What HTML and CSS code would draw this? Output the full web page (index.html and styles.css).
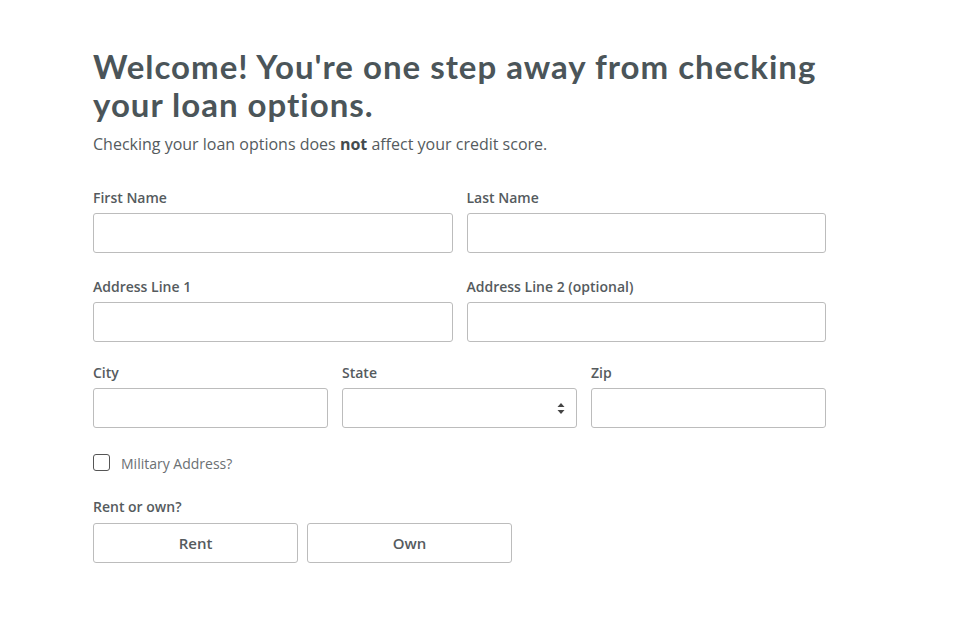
FILE: index.html
```html
<!DOCTYPE html>
<html lang="en">
<head>
    <meta charset="UTF-8">
    <meta name="viewport" content="width=device-width, initial-scale=1.0">
    <title>Check your loan options</title>
    <link rel="stylesheet" href="styles.css">
</head>
<body>
    <div class="container">
        <h1>Welcome! You're one step away from checking your loan options.</h1>
        <p class="subtitle">Checking your loan options does <b>not</b> affect your credit score.</p>

        <form class="form">
            <div class="row two">
                <div class="field">
                    <label>First Name</label>
                    <input type="text">
                </div>
                <div class="field">
                    <label>Last Name</label>
                    <input type="text">
                </div>
            </div>

            <div class="row two address">
                <div class="field">
                    <label>Address Line 1</label>
                    <input type="text">
                </div>
                <div class="field">
                    <label>Address Line 2 (optional)</label>
                    <input type="text">
                </div>
            </div>

            <div class="row three">
                <div class="field">
                    <label>City</label>
                    <input type="text">
                </div>
                <div class="field">
                    <label>State</label>
                    <div class="select">
                        <span class="arrows">
                            <svg width="8" height="13" viewBox="0 0 8 13"><path d="M4 1 L7.5 5 L0.5 5 Z M4 12 L7.5 8 L0.5 8 Z" fill="#444"/></svg>
                        </span>
                    </div>
                </div>
                <div class="field">
                    <label>Zip</label>
                    <input type="text">
                </div>
            </div>

            <label class="check">
                <span class="box"></span>
                <span>Military Address?</span>
            </label>

            <div class="choice">
                <label>Rent or own?</label>
                <div class="buttons">
                    <button type="button">Rent</button>
                    <button type="button">Own</button>
                </div>
            </div>
        </form>
    </div>
</body>
</html>
```

FILE: styles.css
```css
body {
    margin: 0;
    padding: 0;
    background: #ffffff;
    font-family: "Open Sans", Arial, sans-serif;
    color: #555b5e;
}
.container {
    width: 733px;
    padding: 47px 0 0 93px;
}
h1 {
    font-family: Lato, "Open Sans", sans-serif;
    font-weight: 700;
    font-size: 33px;
    line-height: 38px;
    color: #4b5559;
    margin: 0;
    letter-spacing: 1px;
}
.subtitle {
    margin: 10px 0 0;
    font-size: 16px;
    line-height: 22px;
    color: #555b5e;
}
.subtitle b {
    font-weight: 700;
    color: #444b4e;
}
.form {
    margin-top: 33px;
}
.row {
    display: grid;
    gap: 14px;
    margin-bottom: 24px;
}
.row.address {
    margin-bottom: 21px;
}
.row.three {
    margin-bottom: 23px;
}
.row.two {
    grid-template-columns: 1fr 1fr;
}
.row.three {
    grid-template-columns: 1fr 1fr 1fr;
}
.field label,
.choice label {
    display: block;
    font-size: 14px;
    font-weight: 600;
    line-height: 20px;
    color: #555b5e;
    margin-bottom: 5px;
}
input,
.select {
    box-sizing: border-box;
    display: block;
    width: 100%;
    height: 40px;
    border: 1px solid #bcbcbc;
    border-radius: 3px;
    background: #fff;
    margin: 0;
}
.select {
    position: relative;
}
.arrows {
    position: absolute;
    right: 11px;
    top: 13px;
    line-height: 0;
}
.check {
    display: flex;
    align-items: center;
    gap: 11px;
    font-size: 14px;
    line-height: 18px;
    color: #6b7073;
    margin-top: 1px;
}
.box {
    box-sizing: border-box;
    width: 17px;
    height: 17px;
    border: 1px solid #555;
    border-radius: 3px;
}
.check span:last-child {
    margin-top: 4px;
}
.choice {
    margin-top: 24px;
}
.choice label {
    margin-bottom: 6px;
}
.buttons {
    display: flex;
    gap: 9px;
}
button {
    box-sizing: border-box;
    width: 205px;
    height: 40px;
    background: #fff;
    border: 1px solid #bcbcbc;
    border-radius: 3px;
    font-family: "Open Sans", Arial, sans-serif;
    font-size: 15px;
    font-weight: 600;
    color: #555b5e;
    cursor: pointer;
}
```
